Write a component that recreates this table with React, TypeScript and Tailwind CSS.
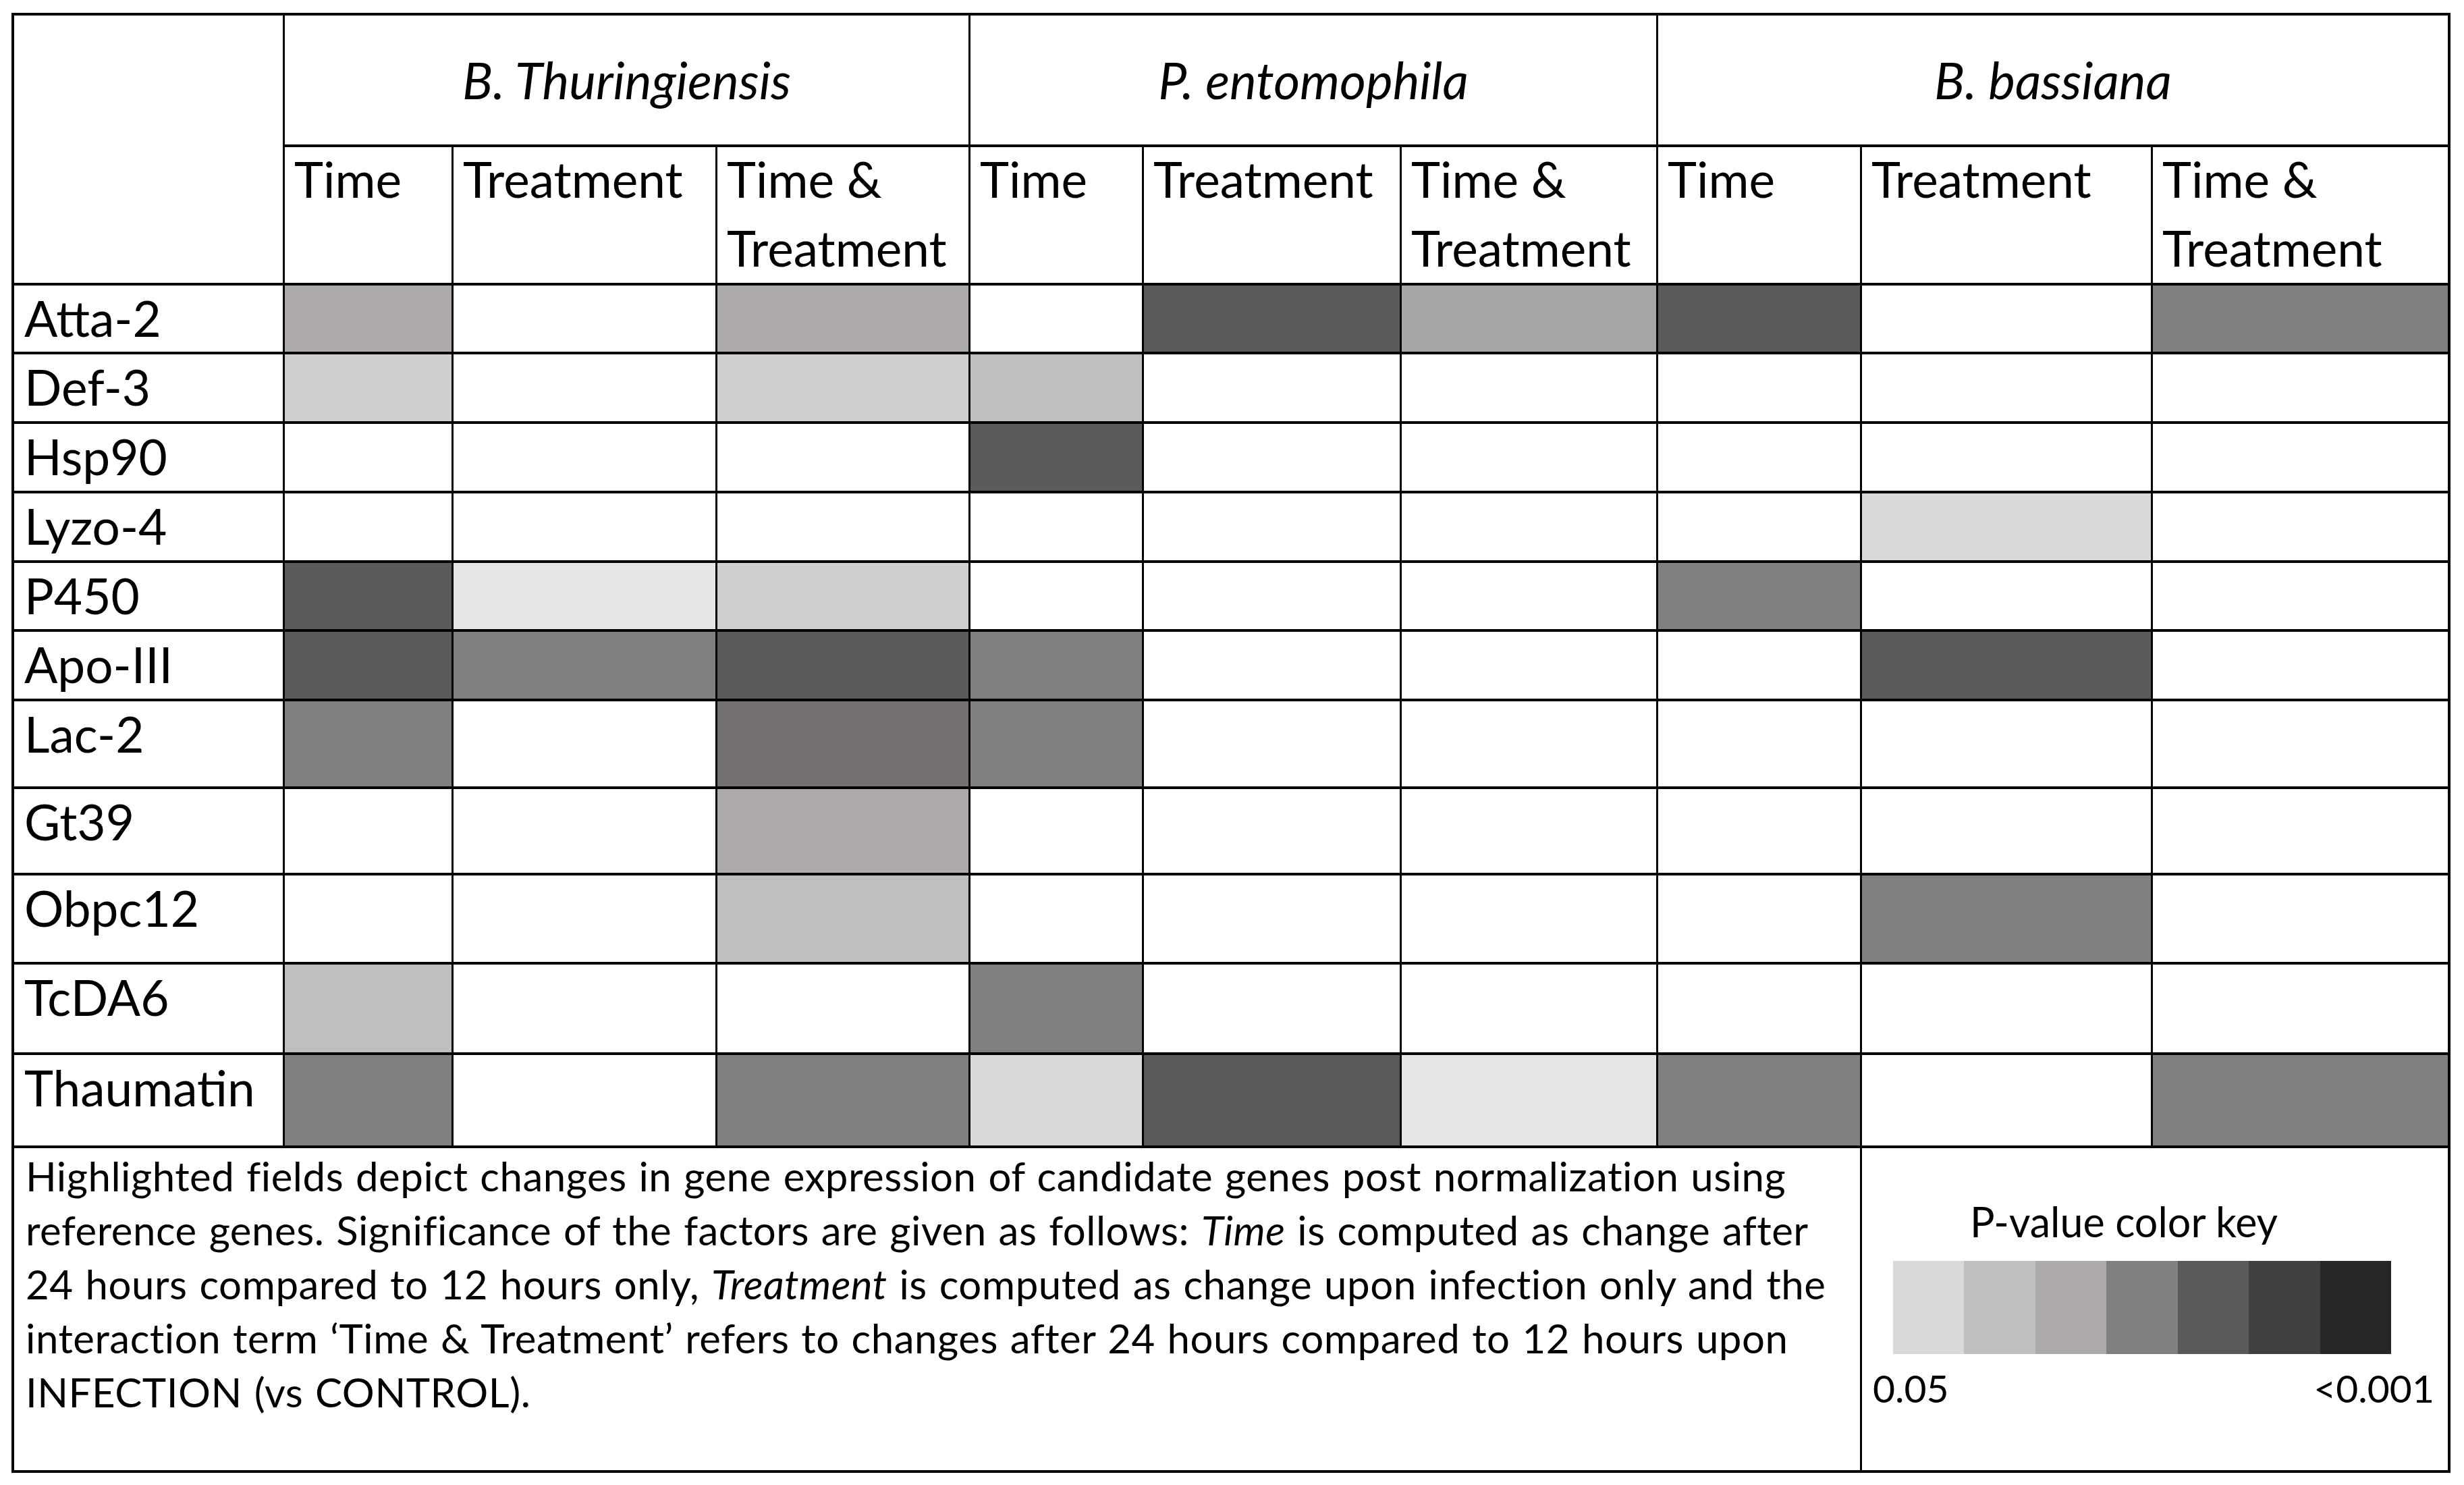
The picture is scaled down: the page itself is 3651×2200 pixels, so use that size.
const A = "#aeaaaa";
const L1 = "#d9d9d9";
const L2 = "#bfbfbf";
const M = "#808080";
const D = "#5a5a5a";
const W1 = "#e7e6e6";
const W2 = "#d0cece";
const W4 = "#767171";
const G6 = "#a6a6a6";
const _ = "";

const SPECIES = ["B. Thuringiensis", "P. entomophila", "B. bassiana"];

const ROWS: { gene: string; cells: string[] }[] = [
  { gene: "Atta-2", cells: [A, _, A, _, D, G6, D, _, M] },
  { gene: "Def-3", cells: [W2, _, W2, L2, _, _, _, _, _] },
  { gene: "Hsp90", cells: [_, _, _, D, _, _, _, _, _] },
  { gene: "Lyzo-4", cells: [_, _, _, _, _, _, _, L1, _] },
  { gene: "P450", cells: [D, W1, W2, _, _, _, M, _, _] },
  { gene: "Apo-III", cells: [D, M, D, M, _, _, _, D, _] },
  { gene: "Lac-2", cells: [M, _, W4, M, _, _, _, _, _] },
  { gene: "Gt39", cells: [_, _, A, _, _, _, _, _, _] },
  { gene: "Obpc12", cells: [_, _, L2, _, _, _, _, M, _] },
  { gene: "TcDA6", cells: [L2, _, _, M, _, _, _, _, _] },
  { gene: "Thaumatin", cells: [M, _, M, L1, D, W1, M, _, M] },
];

const KEY = ["#d9d9d9", "#bfbfbf", "#aeaaaa", "#808080", "#595959", "#404040", "#262626"];

export default function App() {
  return (
    <div className="w-[3651px] h-[2200px] bg-white pl-[17px] pt-[19px] text-black font-[family-name:Lato,sans-serif]">
      <div className="inline-grid bg-black p-[4px] gap-x-[3px] gap-y-[4px] grid-cols-[398px_247px_388px_372px_254px_379px_377px_299px_428px_437px] grid-rows-[191px_201px_98px_99px_99px_99px_98px_99px_126px_124px_128px_130px_134px_477px]">
        <div className="bg-white row-span-2" />
        {SPECIES.map((s) => (
          <div key={s} className="bg-white col-span-3 flex items-center justify-center text-[75px] italic">
            {s}
          </div>
        ))}

        {SPECIES.map((s) => (
          <>
            <div key={s + "1"} className="bg-white pl-[14px] text-[73px] leading-[102px]">
              <div className="-mt-[4px]">Time</div>
            </div>
            <div key={s + "2"} className="bg-white pl-[14px] text-[73px] leading-[102px]">
              <div className="-mt-[4px]">Treatment</div>
            </div>
            <div key={s + "3"} className="bg-white pl-[14px] text-[73px] leading-[102px]">
              <div className="-mt-[4px]">
                <div>Time &amp;</div>
                <div>Treatment</div>
              </div>
            </div>
          </>
        ))}

        {ROWS.map((r) => (
          <>
            <div key={r.gene} className="bg-white pl-[15px] text-[73px] leading-[96px] whitespace-nowrap">
              {r.gene}
            </div>
            {r.cells.map((c, i) => (
              <div key={r.gene + i} className={c ? "" : "bg-white"} style={c ? { backgroundColor: c } : undefined} />
            ))}
          </>
        ))}

        <div className="bg-white col-span-8 pl-[17px] pt-[1px] text-[60px] leading-[80px] tracking-[0.5px] [word-spacing:2px] whitespace-nowrap">
          <div>Highlighted fields depict changes in gene expression of candidate genes post normalization using</div>
          <div>
            reference genes. Significance of the factors are given as follows: <i>Time</i> is computed as change after
          </div>
          <div>
            24 hours compared to 12 hours only, <i>Treatment</i> is computed as change upon infection only and the
          </div>
          <div>interaction term ‘Time &amp; Treatment’ refers to changes after 24 hours compared to 12 hours upon</div>
          <div>INFECTION (vs CONTROL).</div>
        </div>

        <div className="bg-white col-span-2 flex flex-col text-[57px] leading-[68px]">
          <div className="pt-[75px] pl-[160px] text-[61px] whitespace-nowrap">P-value color key</div>
          <div className="mt-[24px] ml-[46px] flex w-[738px] h-[138px]">
            {KEY.map((k) => (
              <div key={k} className="flex-1" style={{ backgroundColor: k }} />
            ))}
          </div>
          <div className="mt-[16px] pl-[16px] pr-[20px] flex justify-between">
            <span>0.05</span>
            <span>&lt;0.001</span>
          </div>
        </div>
      </div>
    </div>
  );
}
